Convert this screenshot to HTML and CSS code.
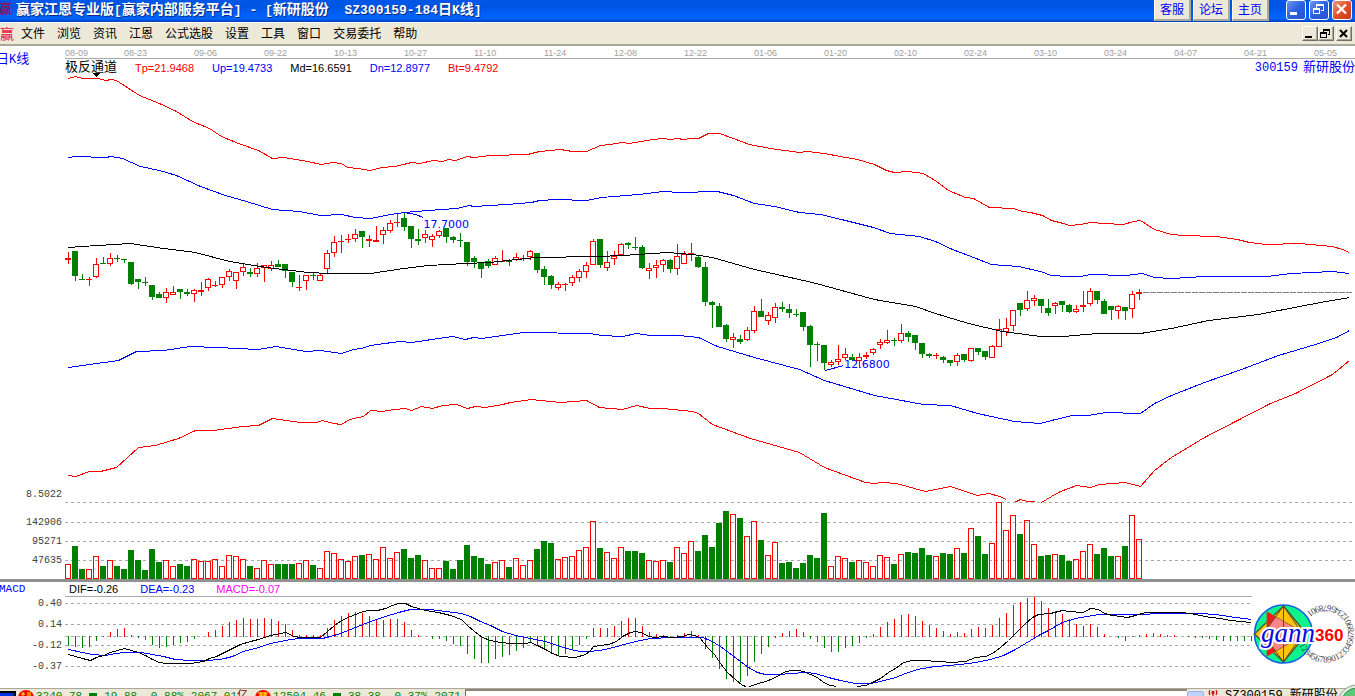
FILE: index.html
```html
<!DOCTYPE html>
<html lang="zh-CN">
<head>
<meta charset="utf-8">
<title>赢家江恩专业版</title>
<link rel="stylesheet" href="styles.css">
</head>
<body>
<header class="titlebar">
  <span class="app-mark">赢</span>
  <h1 class="title">赢家江恩专业版<span class="lat">[</span>赢家内部服务平台<span class="lat">] - [</span>新研股份<span class="lat">&nbsp; SZ300159-184</span>日<span class="lat">K</span>线<span class="lat">]</span></h1>
  <nav class="links">
    <button class="link-btn">客服</button>
    <button class="link-btn">论坛</button>
    <button class="link-btn">主页</button>
  </nav>
  <div class="window-btns">
    <button class="win-btn" aria-label="最小化"><svg width="20" height="20"><rect x="4" y="12" width="7" height="3" fill="#fff"/></svg></button>
    <button class="win-btn" aria-label="还原"><svg width="20" height="20" fill="none" stroke="#fff" shape-rendering="crispEdges"><path d="M7.5 8V4.5h7v6H12M7 5.5h8M4.500 8.500h6v5h-6zM4 9.500h7"/></svg></button>
    <button class="win-btn close" aria-label="关闭"><svg width="20" height="20"><path d="M5 4.500l9 9M14 4.500l-9 9" stroke="#fff" stroke-width="2.300"/></svg></button>
  </div>
</header>
<nav class="menubar">
  <span class="menu-mark">赢</span>
  <ul class="menu">
    <li><button>文件</button></li><li><button>浏览</button></li><li><button>资讯</button></li><li><button>江恩</button></li><li><button>公式选股</button></li><li><button>设置</button></li><li><button>工具</button></li><li><button>窗口</button></li><li><button>交易委托</button></li><li><button>帮助</button></li>
  </ul>
  <div class="mdi-btns">
    <button class="mdi-btn" aria-label="最小化"><svg width="14" height="12"><rect x="2" y="8" width="7" height="2"/></svg></button>
    <button class="mdi-btn" aria-label="还原"><svg width="14" height="12" fill="none" stroke="#000" shape-rendering="crispEdges"><path d="M4.500 4V1.500h6v5H9M4 2.500h7M1.500 4.500h6v5h-6zM1 5.500h7"/></svg></button>
    <button class="mdi-btn mdi-close" aria-label="关闭"><svg width="14" height="12"><path d="M3 2l7 7M10 2l-7 7" stroke="#000" stroke-width="2"/></svg></button>
  </div>
</nav>
<main class="board">
  <section class="panel">
    <h2 class="side-title period">日<span class="lat">K</span>线</h2>
    <div class="top-rows">
      <div class="dates"><span>08-09</span><span>08-23</span><span>09-06</span><span>09-22</span><span>10-13</span><span>10-27</span><span>11-10</span><span>11-24</span><span>12-08</span><span>12-22</span><span>01-06</span><span>01-20</span><span>02-10</span><span>02-24</span><span>03-10</span><span>03-24</span><span>04-07</span><span>04-21</span><span>05-05</span></div>
      <div class="legend">
        <span class="indicator">极反通道</span>
        <span class="red">Tp=21.9468</span><span class="blue">Up=19.4733</span><span>Md=16.6591</span><span class="blue">Dn=12.8977</span><span class="red">Bt=9.4792</span>
        <span class="stock"><span class="code">300159</span>新研股份</span>
      </div>
    </div>
    <div class="axis price-axis"><span>8.5022</span></div>
    <div class="plot">
      <svg class="price-svg" id="price" viewBox="65 75 1290 427" preserveAspectRatio="none"></svg>
      <span class="tag high-tag">17.7000</span>
      <span class="tag low-tag">12.6800</span>
    </div>
    <div class="axis volume-axis"><span>142906</span><span>95271</span><span>47635</span></div>
    <div class="plot"><svg class="volume-svg" id="volume" viewBox="65 502 1290 77" preserveAspectRatio="none"></svg></div>
  </section>
  <section class="panel macd">
    <h2 class="side-title macd-title">MACD</h2>
    <div class="macd-legend"><span>DIF=-0.26</span><span class="blue">DEA=-0.23</span><span class="magenta">MACD=-0.07</span></div>
    <div class="axis macd-axis"><span>0.40</span><span>0.14</span><span>-0.12</span><span>-0.37</span></div>
    <div class="plot"><svg class="macd-svg" id="macd" viewBox="65 597 1187 91" preserveAspectRatio="none"></svg></div>
    <svg class="brand" width="103" height="66" viewBox="1252 601 103 66" role="img" aria-label="gann360">
      <circle cx="1283.500" cy="634" r="29" fill="#0cf58c" stroke="#1660e8" stroke-width="1.600"/>
      <path d="M1283.500 606l23 28-23 28-29-28z" fill="#ffc30a" stroke="#54542c" stroke-width="1.400"/>
      <path d="M1267 612l39 22-39 22z" fill="#ff8585" stroke="#946a3a" stroke-width="1"/>
      <path d="M1267 612l9 5-9 11zM1267 656l9-5-9-11z" fill="#f01c1c"/>
      <path d="M1283.500 606v56M1283.500 606l-16 22M1283.500 662l-16-22M1283.500 606l19 28-19 28" stroke="#54542c" fill="none"/>
      <path id="ring" d="M1297 634a28.500 28.500 0 0 0 57 0a28.500 28.500 0 0 0-50-19" fill="none"/>
      <text class="ring-text"><textPath href="#ring" startOffset="11">12345678901233456789012345678901</textPath></text>
      <text class="gann" x="1261" y="642">gann</text>
      <text class="num" x="1315" y="641">360</text>
    </svg>
  </section>
</main>
<footer class="status">
  <div class="quotes">
    <svg width="16" height="16"><rect y="3" width="15" height="12" fill="#fff" stroke="#000" stroke-width="2"/><rect y="4" width="14" height="3" fill="#0030e0"/><path d="M1 9.500h13" stroke="#000" stroke-dasharray="2 1"/></svg>
    <svg width="16" height="16"><circle cx="8" cy="9" r="8" fill="#f00"/><path d="M3 5h4M5 3v6M9 4h4M9 6h4" stroke="#ff0" fill="none"/></svg>
    <span>3240.78</span><i class="down"></i><span>19.88</span><span>-0.88%</span><span>2067.01<b>亿</b></span>
    <svg width="16" height="16"><circle cx="8" cy="9" r="8" fill="#f00"/><path d="M3 4h10M4 6h8M6 3v6M10 3v6" stroke="#ff0" fill="none"/></svg>
    <span>12504.46</span><i class="down"></i><span>38.38</span><span>-0.37%</span><span>2071.4</span>
  </div>
  <div class="ticker"></div>
  <div class="scroll"></div>
  <div class="current">
    <svg width="10" height="14" fill="none" stroke="#d01010" stroke-width="1.300"><path d="M5 4v9M2 1q-1.500 2.500 0 5M8 1q1.500 2.500 0 5"/><circle cx="5" cy="3.500" r="1" fill="#2040d0"/></svg>
    <span>SZ300159 新研股份</span>
  </div>
  <svg class="orb" width="40" height="40"><circle cx="20" cy="20" r="19" fill="#e8ece6" stroke="#8d9a8d"/><circle cx="20" cy="20" r="16" fill="#5cc878" stroke="#2a9a4c"/></svg>
</footer>
<script src="chart.js"></script>
</body>
</html>
```
FILE: styles.css
```css
* { box-sizing: border-box; }
body {
  margin: 0;
  height: 100vh;
  overflow: hidden;
  display: flex;
  flex-direction: column;
  background: #fff;
  color: #000;
  font: 12px/14px "Liberation Sans", "Noto Sans CJK SC", sans-serif;
}
button { font: inherit; padding: 0; border: 0; background: none; color: inherit; }
h1, h2 { margin: 0; font-weight: normal; }
svg { display: block; flex: none; }
.red { color: #f00; }
.blue { color: #00f; }
.magenta { color: #f0f; }

.titlebar {
  flex: none;
  display: flex;
  height: 23px;
  background: linear-gradient(#0058e6, #0054e3 30%, #0061fc 70%, #0064ff 85%, #003dbb);
  border-bottom: 1px solid #fff;
  padding-right: 3px;
}
.app-mark { width: 17px; margin-left: -1px; color: #9c0a46; font-size: 13px; line-height: 18px; }
.title {
  flex: 1;
  white-space: nowrap;
  color: #fff;
  font: bold 14px/16px "Noto Sans CJK SC", sans-serif;
  text-shadow: 1px 1px #0a2a80;
}
.title .lat { font: bold 13px/16px "Liberation Mono", monospace; }
.links { display: flex; gap: 2px; margin-right: 17px; }
.link-btn {
  width: 37px;
  height: 21px;
  background: #ece9d8;
  border-right: 2px solid #aca899;
  border-bottom: 2px solid #aca899;
  border-left: 1px solid #fff;
  color: #00f;
  line-height: 16px;
}
.window-btns { display: flex; gap: 3px; }
.win-btn {
  width: 20px;
  height: 20px;
  border: 1px solid #fff;
  border-radius: 3px;
  background: linear-gradient(135deg, #6f98f4, #2c5fe0 50%, #2453cf);
}
.win-btn svg { margin: -1px; }
.win-btn.close { background: linear-gradient(135deg, #f0987a, #e0512c 50%, #c8380f); }

.menubar {
  flex: none;
  display: flex;
  align-items: center;
  height: 23px;
  padding-right: 3px;
  background: #ece9d8;
  border-bottom: 2px solid #aca899;
}
.menu-mark { width: 21px; color: #e8103c; font-size: 14px; }
.menu { flex: 1; display: flex; gap: 12px; margin: 0; padding: 0; list-style: none; }
.mdi-btns { display: flex; }
.mdi-btn {
  width: 16px;
  height: 15px;
  background: #ece9d8;
  border: 1px solid;
  border-color: #fff #716f64 #716f64 #fff;
  box-shadow: inset -1px -1px #aca899;
}
.mdi-close { margin-left: 2px; }

.board { flex: none; }
.panel { display: grid; grid-template-columns: 65px minmax(0, 1fr); }
.side-title { color: #00f; font: 13px/16px "Noto Sans CJK SC", sans-serif; }
.side-title .lat { font: 12px/16px "Liberation Mono", monospace; }
.period { margin: 4px 0 0 -4px; }
.dates {
  display: flex;
  height: 13px;
  overflow: hidden;
  border-bottom: 1px solid #a8a8a8;
  color: #a0a0a0;
  font-size: 9px;
  line-height: 14px;
}
.dates span { flex: 0 0 70px; }
.dates span:first-child { flex-basis: 59px; }
.legend { display: flex; height: 16px; font-size: 11px; line-height: 18px; gap: 18px; white-space: nowrap; }
.indicator { font: 13px/14px "Noto Sans CJK SC", sans-serif; }
.stock { margin-left: auto; color: #00f; font: 13px/14px "Noto Sans CJK SC", sans-serif; }
.code { font: 12px/14px "Liberation Mono", monospace; margin-right: 5px; }
.axis {
  display: flex;
  flex-direction: column;
  padding-right: 3px;
  text-align: right;
  color: #404040;
  font: 10px/14px "Liberation Mono", monospace;
}
.price-axis { justify-content: flex-end; }
.volume-axis { gap: 5px; padding-top: 14px; }
.macd-axis { gap: 7px; }
.plot { position: relative; }
.plot svg { width: 100%; overflow: visible; shape-rendering: crispEdges; }
.price-svg { height: 427px; }
.volume-svg { height: 77px; }
.macd-svg { height: 91px; }
.tag { position: absolute; color: #00f; font: 11px/14px "DejaVu Sans", sans-serif; }
.high-tag { left: 27.800%; top: 143px; }
.low-tag { left: 60.400%; top: 283px; }

.macd { grid-template-columns: 65px minmax(0, 1fr) 103px; border-top: 3px solid #909090; }
.macd-title { font: 11px/14px "Liberation Mono", monospace; margin-left: -1px; }
.macd-legend {
  display: flex;
  gap: 22px;
  grid-column: 2;
  height: 15px;
  padding-left: 4px;
  border-bottom: 1px solid #a8a8a8;
  font-size: 11px;
}
.brand { grid-column: 3; grid-row: 1 / 3; margin-top: 19px; }
.ring-text { font: 9px "Liberation Serif", serif; fill: #444; }
.gann {
  font: italic 27px "Liberation Serif", serif;
  fill: #0808e0;
  stroke: #fff;
  stroke-width: 4px;
  paint-order: stroke;
}
.num { font: bold 17px "Liberation Sans", sans-serif; fill: #f00; stroke: #fff; stroke-width: 3px; paint-order: stroke; }

.status { position: relative; flex: none; display: flex; height: 22px; background: #ece9d8; border-top: 1px solid #aca899; }
.quotes {
  display: flex;
  gap: 2px;
  width: 465px;
  flex: none;
  overflow: hidden;
  white-space: nowrap;
  color: #008000;
  font: 11px/14px "Liberation Mono", "Noto Sans CJK SC", monospace;
}
.quotes span { margin-right: 5px; }
.quotes b { font-weight: normal; color: #800000; }
.down { flex: none; width: 8px; height: 8px; margin: 4px 5px 0 0; background: #008000; }
.ticker { flex: 1; background: #fff; border: solid #716f64; border-width: 2px 0 0 1px; border-top-color: #8c887a; }
.scroll { width: 17px; margin-top: 2px; background: #c1d2fb; border: 1px solid #9ab4ee; border-radius: 2px; }
.current { display: flex; gap: 7px; width: 151px; padding-left: 4px; white-space: nowrap; font: 12px/14px "Liberation Mono", "Noto Sans CJK SC", monospace; }
.orb { position: absolute; right: -22px; top: -5px; }
```
FILE: chart.js
```js
const RED = '#f00', GREEN = '#008000', BLUE = '#00f';
const STEP = 7;

// colour, high, body top, body bottom, low
const candles = `R252 258 260 264|G251 251 276 281|G274 279 280 280|R277 279 280 286|R258 264 277 278|G257 263 264 264|R253 258 264 266|G255 258 259 262|G259 259 260 263|G262 262 284 285|G279 279 282 289|G277 282 283 286|G285 285 297 300|G292 294 298 298|R288 292 298 303|R286 292 295 295|G289 289 292 299|G289 292 294 296|R289 290 294 302|R282 290 292 296|R278 279 288 291|R281 285 286 287|R277 277 285 288|R269 271 277 281|R272 272 281 289|R263 267 272 276|G268 272 274 277|R263 268 274 277|R265 265 268 282|R261 265 269 271|G260 264 267 267|G264 264 271 278|G272 272 282 287|R275 287 288 291|R275 275 281 290|G272 275 276 280|R274 275 281 281|R250 253 269 273|R236 242 253 257|R235 241 242 253|R234 239 240 243|R229 234 239 242|G231 231 237 248|R235 239 241 247|R226 240 242 242|R227 230 235 244|R220 223 231 233|R213 222 223 227|G213 218 227 231|G226 226 239 248|G229 239 241 245|R230 234 238 243|R234 236 240 247|R230 231 236 238|G228 228 237 243|G236 237 240 243|G233 240 241 247|G242 242 262 266|G256 258 262 268|G262 262 269 278|G259 261 266 268|R256 258 265 265|R250 261 262 262|G259 261 262 266|R253 257 260 261|R255 258 259 261|R250 251 257 260|G253 253 270 273|G266 269 277 285|G275 276 285 289|R282 284 288 290|R283 284 285 291|R275 277 283 286|R269 271 278 282|R262 265 272 278|R239 241 265 265|G239 239 265 268|R251 262 268 271|R251 256 259 265|R243 244 255 255|G242 243 245 249|G237 247 248 250|G245 247 268 269|R263 268 271 279|R260 265 268 278|R259 260 265 272|G259 260 269 273|R244 256 269 275|R251 254 264 264|R243 253 254 261|G255 257 267 268|G262 267 302 306|G301 302 305 328|G303 306 327 327|G324 325 339 342|R333 337 340 348|G335 339 342 344|R327 330 340 341|R306 311 331 333|G299 311 317 317|R312 315 321 325|R303 307 318 323|G302 307 309 312|G304 309 313 318|G309 314 315 317|G312 312 327 331|G325 326 345 367|G342 344 345 361|G345 345 363 370|R360 362 365 367|R345 359 362 365|R348 354 358 360|G354 357 360 361|R353 357 361 368|R352 355 357 359|R348 349 353 355|R339 342 345 349|R330 340 343 344|G338 340 341 346|R324 333 341 343|G331 333 337 342|G335 335 343 350|G343 343 354 358|G353 354 356 358|R353 355 356 359|G356 357 360 363|G360 360 363 366|R353 355 362 366|G354 354 360 362|R348 348 361 362|G348 348 352 355|G351 351 357 360|R345 346 358 358|R319 329 347 347|R318 328 332 336|R310 310 326 331|G303 303 310 316|R291 300 309 311|R295 298 301 306|G299 299 306 313|G299 308 313 316|R302 303 306 314|G301 301 305 312|G304 305 312 313|R305 309 312 313|R291 305 307 312|R288 291 304 306|G291 291 300 304|G299 301 314 314|G306 306 310 320|R305 306 311 319|G307 307 311 320|R291 294 309 318|R289 292 294 300`
  .split('|').map(s => [s[0] === 'R', ...s.slice(1).split(' ').map(Number)]);

// top edge of every volume bar; the base is at 579
const volumes = `564 546 569 569 556 566 560 566 569 550 560 570 549 562 560 566 564 566 559 561 561 559 566 555 556 559 566 568 560 564 564 564 564 563 560 565 568 551 553 559 561 556 555 554 559 547 558 552 549 558 555 560 568 568 561 569 560 545 556 558 564 562 560 567 558 565 560 549 541 543 559 557 556 550 547 521 548 552 558 547 551 551 553 560 561 560 562 547 553 541 551 535 547 523 511 514 518 536 521 540 555 542 563 562 568 563 555 558 513 566 556 558 562 560 562 566 555 557 564 554 552 553 548 555 556 553 554 548 553 528 536 554 543 502 530 515 534 520 544 556 555 554 555 561 559 551 544 554 548 556 556 546 515 539`.split(' ').map(Number);

// bars whose colour differs from their candle, by index
const volumeColours = { 28: 'R', 95: 'R', 110: 'R', 112: 'G' };

// MACD sticks: values under 636 rise in red, values over it fall in green
const sticks = `646 647 648 647 641 637 632 629 628 635 638 640 645 648 647 645 643 642 639 636 632 630 626 622 620 618 619 619 618 619 621 624 630 635 635 635 635 628 620 616 613 612 613 616 620 620 619 619 622 630 635 636 639 639 641 644 646 654 659 663 663 659 657 655 651 648 643 646 649 653 656 654 650 645 639 628 628 628 626 621 618 618 626 632 634 635 637 635 633 631 635 649 658 669 679 682 682 676 662 654 647 638 633 631 629 632 639 642 648 652 652 648 646 643 638 634 627 622 619 615 614 616 621 625 628 631 634 632 633 629 627 628 625 618 613 605 602 598 597 601 608 611 614 619 624 626 624 627 634 636 638 641 637 635 634 633 634 635 635 636 637 638 638 639 640 641 641 641 641 641`.split(' ').map(Number);

const line = (d, colour) => `<path transform="translate(.5 .5)" fill="none" stroke="${colour}" d="${d.trim().split('|').map(p => 'M' + p.trim().split(' ').join('L')).join('')}"/>`;
const rect = (x, y, w, h, c) => h > 0 ? `<rect x="${x}" y="${y}" width="${w}" height="${h}" fill="${c}"/>` : '';
const box = (x, y, h, red) => red && h > 2
  ? `<rect x="${x + .5}" y="${y + .5}" width="5" height="${h - 1}" fill="none" stroke="${RED}"/>`
  : rect(x, y, 6, h, red ? RED : GREEN);
const grid = (y, x1, x2, dash = '3 3') => `<path d="M${x1} ${y + .5}H${x2}" stroke="#a8a8a8" stroke-dasharray="${dash}"/>`;

const curves = [
  [RED, '68,78 75,76 82,78 97,78 106,80 110,79 116,80 139,95 159,103 176,111 192,121 209,128 221,136 238,143 258,150 272,158 284,157 295,159 307,161 321,164 332,162 341,163 347,167 357,168 369,170 382,167 394,166 403,164 411,162 419,163 433,160 442,161 448,159 455,160 467,156 473,157 490,155 527,154 539,151 560,149 572,151 586,151 600,145 610,144 621,142 629,143 646,140 662,138 671,139 677,138 683,139 691,138 698,138 708,133 719,133 733,138 749,144 770,148 799,152 807,151 824,153 840,156 857,159 874,164 886,170 894,172 907,171 923,173 936,181 948,190 965,197 973,198 989,207 1013,208 1022,211 1030,212 1042,215 1051,220 1063,223 1069,225 1080,224 1090,222 1104,223 1123,224 1133,221 1140,220 1154,229 1171,234 1183,235 1216,236 1237,239 1249,242 1266,244 1299,243 1332,246 1342,249 1349,252'],
  [BLUE, '68,157 75,156 105,157 111,156 122,158 140,166 159,170 176,175 200,186 225,195 246,201 272,209 299,211 320,215 341,214 355,217 370,218 390,214 404,212 427,210 456,208 469,205 473,206 506,204 531,202 539,200 556,199 586,200 601,197 638,194 663,191 679,192 717,191 733,195 754,203 774,206 799,212 820,214 845,220 873,227 890,233 919,236 935,241 952,249 968,255 991,264 1018,266 1040,271 1051,275 1068,276 1080,276 1090,274 1125,275 1142,273 1154,277 1171,278 1204,276 1266,276 1291,273 1332,271 1349,273'],
  ['#000', '68,247 81,246 130,243 163,248 195,252 229,261 266,267 308,272 328,273 370,273 403,268 428,265 465,263 489,262 535,257 597,256 622,255 667,252 692,254 712,257 754,269 812,282 874,299 915,306 935,313 968,323 1002,331 1040,336 1063,336 1097,333 1140,333 1171,328 1208,320 1258,314 1299,306 1320,302 1349,297'],
  [BLUE, '68,367 89,364 118,360 136,351 163,350 190,346 217,347 258,349 275,346 306,351 320,350 341,353 353,349 361,348 370,345 399,341 411,342 452,336 465,339 473,337 481,338 523,332 589,333 601,335 622,336 636,333 650,335 679,335 698,337 717,346 754,357 799,369 824,380 874,395 923,404 950,405 977,413 1014,421 1040,423 1051,420 1072,415 1088,415 1105,412 1140,413 1154,403 1171,395 1204,382 1241,369 1278,355 1315,344 1336,337 1349,330'],
  [RED, '68,475 75,476 89,471 100,471 116,467 138,447 155,445 178,438 195,430 213,430 242,426 258,425 272,418 300,422 316,422 322,420 333,423 341,424 349,419 363,416 370,410 382,411 394,409 405,408 411,410 421,406 432,408 442,405 456,404 467,408 475,406 485,407 502,404 510,402 531,399 560,402 586,400 599,407 622,409 636,405 650,408 663,408 692,411 698,413 712,424 750,438 799,452 824,467 865,482 874,483 882,482 896,483 925,491 950,486 977,495 989,493 999,496 1006,499|1014,502 1020,499 1027,501 1034,501|1041,502 1051,496 1060,491 1076,485 1090,487 1099,484 1125,482 1140,486 1154,470 1171,457 1204,437 1237,420 1270,403 1295,393 1332,374 1349,360']
];

let price = '', volume = grid(502, 65, 1352) + [522, 541, 560].map(y => grid(y, 65, 1352)).join('');
candles.forEach(([red, high, top, bottom, low], i) => {
  const x = 65 + STEP * i, colour = red ? RED : GREEN;
  price += rect(x + 3, high, 1, top - high, colour) + rect(x + 3, bottom, 1, low - bottom, colour) + box(x, top, bottom - top, red);
  const volumeRed = volumeColours[i] ? volumeColours[i] === 'R' : red;
  volume += box(x, volumes[i], 579 - volumes[i], volumeRed);
});
price += curves.map(([c, d]) => line(d, c)).join('');
price += line('404,212 415,214 423,217', BLUE) + line('825,370 843,365', BLUE);
price += '<path d="M1143 292.500H1352" stroke="#808080" stroke-dasharray="6 1"/><path d="M93 73h7l-3.500 4z"/>';
document.getElementById('price').innerHTML = price;
document.getElementById('volume').innerHTML = volume;

let macd = [603, 624, 636, 645, 666].map(y => grid(y, 65, 1252)).join('');
sticks.forEach((v, i) => {
  const x = 68 + STEP * i;
  macd += v < 636 ? rect(x, v, 1, 637 - v, RED) : rect(x, 636, 1, v - 636, GREEN);
});
macd += line('68,649 82,652 92,654 105,655 115,653 125,652 140,652 152,654 163,656 175,659 190,660 205,660 220,659 232,656 243,651 258,647 270,643 290,639 300,638 322,638 330,636 340,633 350,629 360,625 370,621 385,616 398,612 410,609 430,609 445,611 461,613 470,616 480,621 490,625 502,631 515,635 530,638 545,641 560,646 570,649 580,651 590,651 605,649 620,645 635,641 650,638 672,637 688,637 702,637 710,640 720,646 732,655 740,661 748,667 757,672 765,674 780,674 790,673 805,672 815,673 828,677 840,680 855,683 870,683 880,681 895,677 905,673 917,669 935,666 960,664 975,662 990,659 1003,655 1015,649 1030,640 1038,635 1048,630 1062,622 1075,618 1098,614 1120,614 1180,613 1200,613 1215,614 1235,617 1251,619', BLUE);
macd += line('68,654 75,656 82,658 90,660 96,657 103,655 110,652 117,650 124,648 131,650 138,652 145,655 152,659 159,662 166,663 190,663 197,662 203,661 209,658 216,656 222,653 230,649 240,644 250,641 258,639 270,635 285,632 294,636 300,637 320,637 327,631 334,625 341,620 350,616 360,612 367,610 377,610 385,608 392,605 398,603 405,603 411,606 418,608 425,610 438,612 450,615 461,619 467,625 474,631 482,637 490,640 500,642 510,643 525,643 530,642 537,645 545,649 552,653 560,656 575,657 585,654 590,650 593,646 600,645 608,644 616,641 622,636 630,632 636,631 643,633 648,636 655,637 663,636 672,637 682,636 688,634 695,635 700,638 707,647 714,654 720,663 727,672 735,679 742,685 746,686|749,686 755,684 768,680 777,676 783,672 790,670 797,670 803,671 810,674 817,677 823,682 830,685 836,686|857,686 865,685 872,682 880,678 888,672 895,668 903,662 912,660 920,660 940,661 950,662 965,661 975,657 985,656 992,653 1000,647 1008,640 1016,632 1024,624 1032,617 1038,614 1050,613 1062,610 1068,611 1083,612 1090,608 1098,609 1104,613 1112,615 1120,616 1127,617 1135,615 1145,612 1180,612 1190,613 1200,615 1210,617 1220,618 1230,620 1240,621 1251,622', '#000');
document.getElementById('macd').innerHTML = macd;
```
